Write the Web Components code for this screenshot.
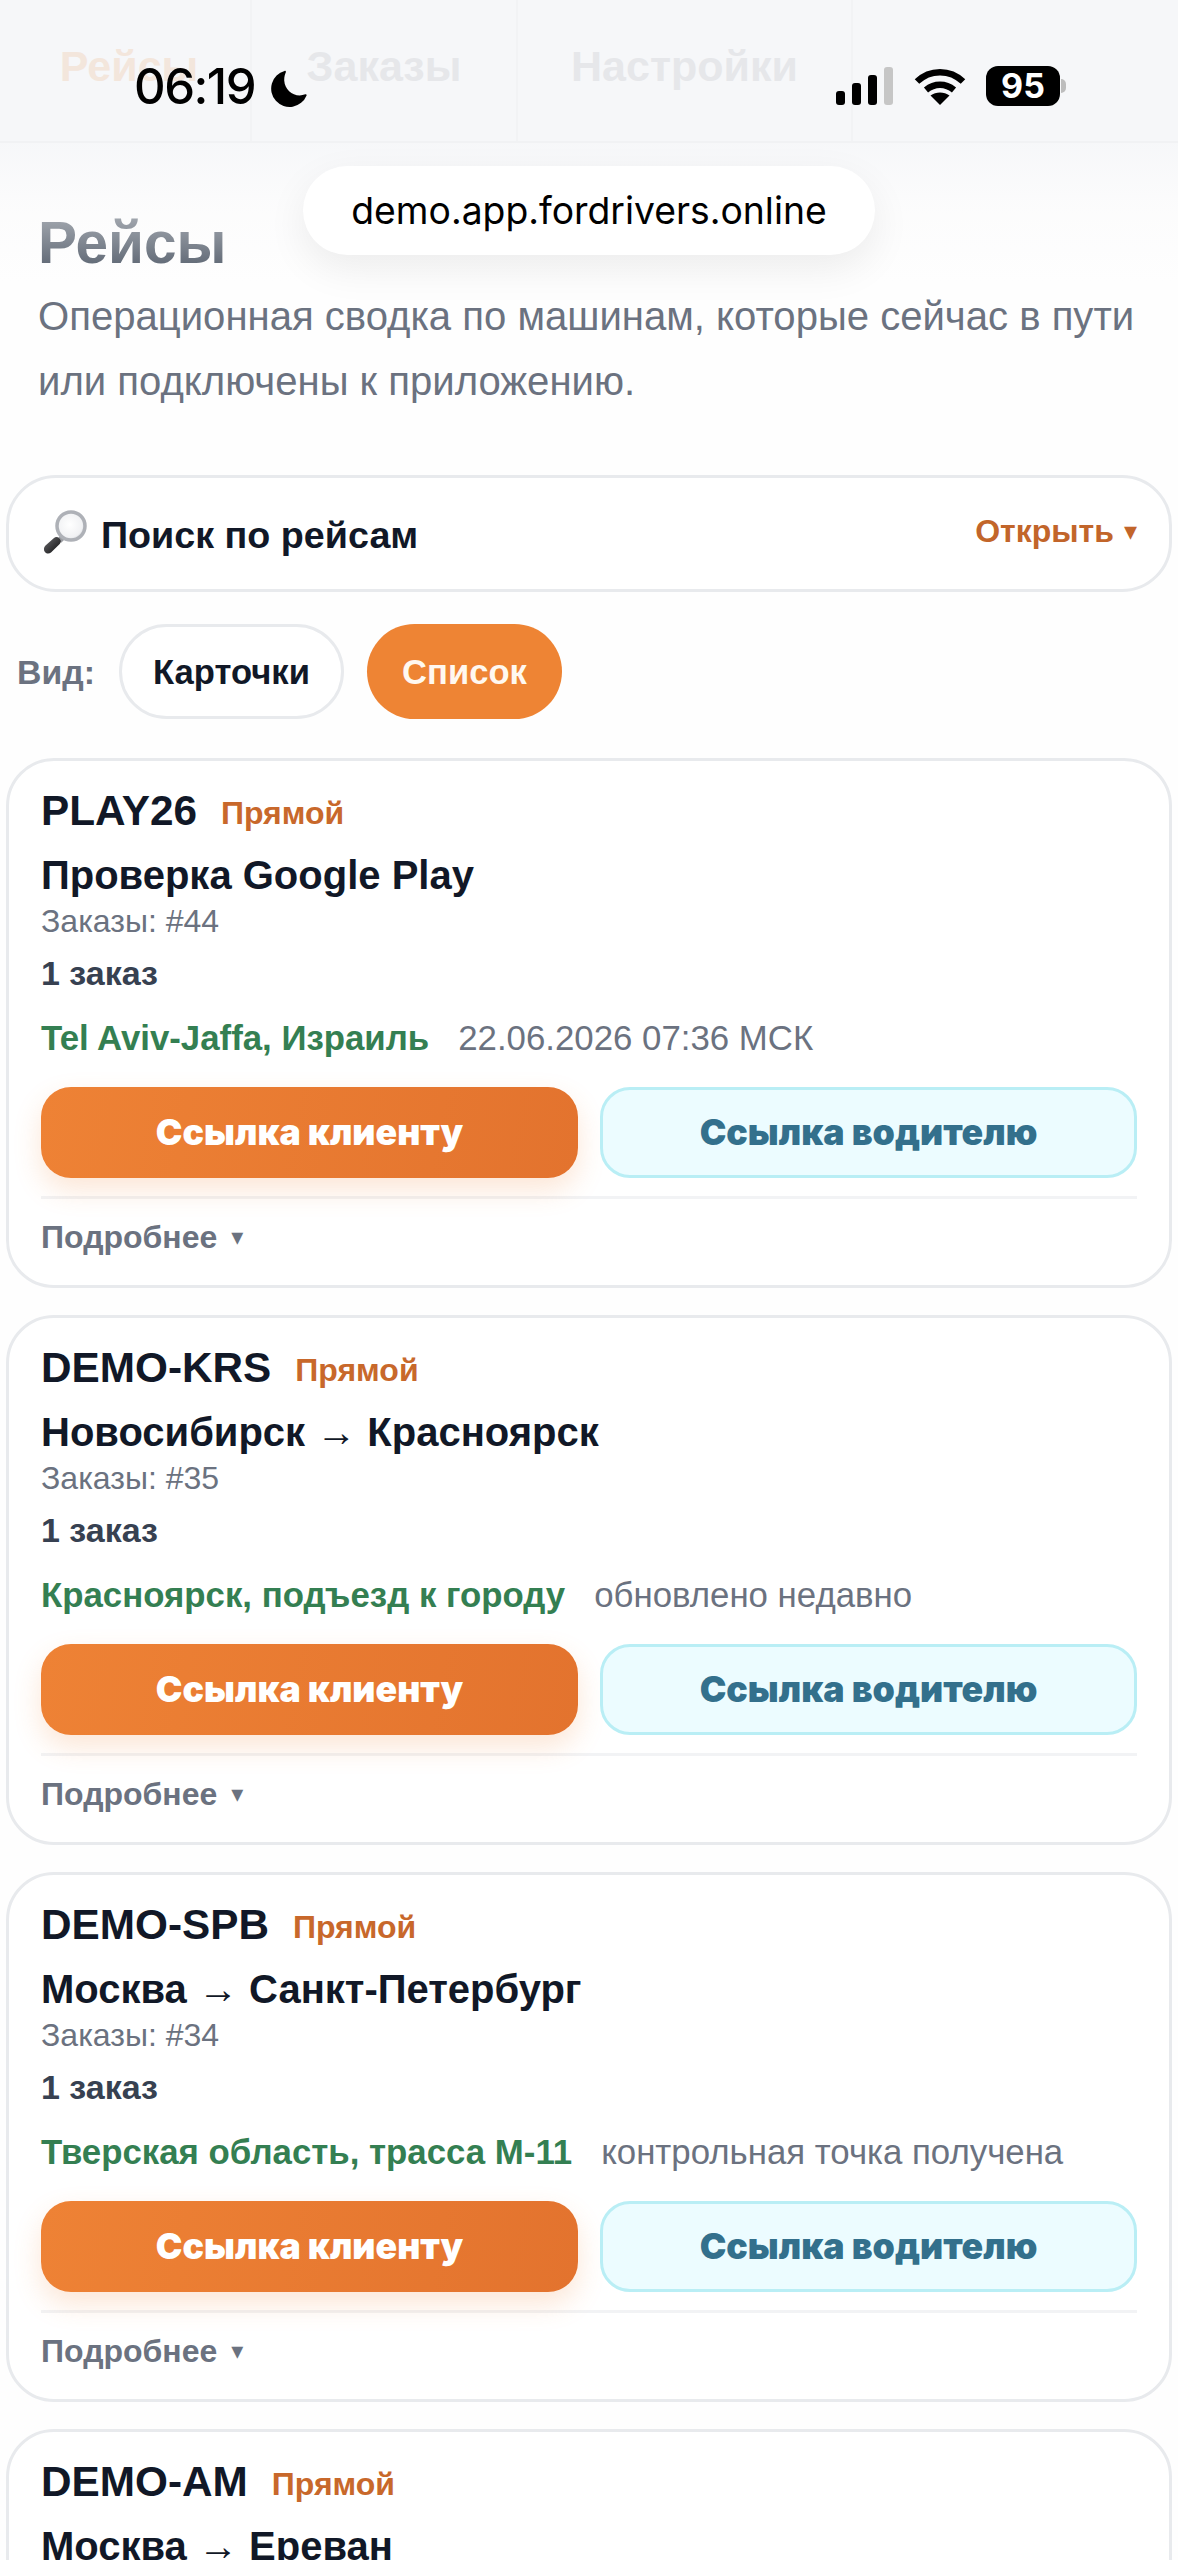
<!DOCTYPE html>
<html lang="ru">
<head>
<meta charset="utf-8">
<title>Рейсы</title>
<style>
html, body { margin: 0; padding: 0; background: #fefefe; }
body {
    height: 2560px;
    overflow: hidden;
    position: relative;
    font-family: "Liberation Sans", Arial, sans-serif;
    color: #111827;
}
main { display: block; padding: 0 6px; }
</style>
</head>
<body>
<top-chrome></top-chrome>
<app-tabs></app-tabs>
<main>
    <page-head title="Рейсы">Операционная сводка по машинам, которые сейчас в пути или подключены к приложению.</page-head>
    <search-panel></search-panel>
    <view-switch></view-switch>
    <trip-card code="PLAY26" route="Проверка Google Play" orders="#44" place="Tel Aviv-Jaffa, Израиль" stamp="22.06.2026 07:36 МСК"></trip-card>
    <trip-card code="DEMO-KRS" route="Новосибирск → Красноярск" orders="#35" place="Красноярск, подъезд к городу" stamp="обновлено недавно"></trip-card>
    <trip-card code="DEMO-SPB" route="Москва → Санкт-Петербург" orders="#34" place="Тверская область, трасса М-11" stamp="контрольная точка получена"></trip-card>
    <trip-card code="DEMO-AM" route="Москва → Ереван"></trip-card>
</main>

<script>
/* Статус-бар телефона и адресная плашка браузера поверх страницы */
class TopChrome extends HTMLElement {
    constructor() {
        super();
        this.attachShadow({ mode: 'open' }).innerHTML = `
<style>
:host { display: block; position: absolute; inset: 0 0 auto 0; height: 290px; z-index: 10; pointer-events: none; }
.veil {
    position: absolute; inset: 143px 0 0 0;
    background: linear-gradient(180deg, rgba(246,247,249,.95) 0, rgba(250,250,251,.6) 60px, rgba(254,254,254,0) 140px);
}
.clock {
    position: absolute; left: 134px; top: 60px; height: 54px;
    display: flex; align-items: center; gap: 15px;
    font: 500 49px/54px Inter, "Liberation Sans", sans-serif; color: #000; letter-spacing: -1.500px;
}
.clock svg { width: 38px; height: 38px; margin-top: 2px; }
.icons { position: absolute; left: 836px; top: 66px; display: flex; align-items: center; }
.icons svg { display: block; }
.battery {
    position: relative; width: 74px; height: 40px; margin-left: 20px; border-radius: 12px; background: #000; color: #fff;
    font: 700 34px/40px Inter, "Liberation Sans", sans-serif; text-align: center;
}
.battery::after {
    content: ''; position: absolute; left: 75px; top: 13px; width: 5px; height: 14px;
    background: #bdbdbd; border-radius: 0 7px 7px 0;
}
.url {
    position: absolute; left: 303px; top: 166px; width: 572px; height: 89px; border-radius: 45px;
    background: #fff; box-shadow: 0 14px 40px rgba(0,0,0,.07);
    display: flex; align-items: center; justify-content: center;
    font: 400 37.300px/1 Inter, "Liberation Sans", sans-serif; color: #000;
}
</style>
<div class="veil"></div>
<div class="clock"><span>06:19</span>
    <svg viewBox="0 0 24 24"><path fill="#000" d="M9.200 1.200a11.600 11.600 0 1 0 13.900 15.500c.2-.5-.3-.9-.8-.7-6.300 2.400-12.900-2-13.300-8.600-.1-2 .3-3.900 1-5.400.2-.5-.3-1-.8-.8z"/></svg>
</div>
<div class="icons">
    <svg width="58" height="38" viewBox="0 0 58 38">
        <rect x="0" y="24" width="9" height="14" rx="3" fill="#000"/>
        <rect x="16" y="16" width="9" height="22" rx="3" fill="#000"/>
        <rect x="32" y="8" width="9" height="30" rx="3" fill="#000"/>
        <rect x="48" y="0" width="9" height="38" rx="3" fill="#c6c6c6"/>
    </svg>
    <svg style="margin-left:20px" width="52" height="38" viewBox="0 0 52 38">
        <path fill="none" stroke="#000" stroke-width="6.500" d="M3 14.500C16 2 36 2 49 14.500"/>
        <path fill="none" stroke="#000" stroke-width="6.500" d="M12 23c8.500-7 19.500-7 28 0"/>
        <path fill="#000" d="M26 38 16.500 28.500c5.500-4 13.500-4 19 0z"/>
    </svg>
    <div class="battery">95</div>
</div>
<div class="url">demo.app.fordrivers.online</div>`;
    }
}

/* Верхние вкладки приложения */
class AppTabs extends HTMLElement {
    constructor() {
        super();
        const items = [
            { label: 'Рейсы', w: 244, color: '#f3e6dc' },
            { label: 'Заказы', w: 266, color: '#e6e7ea' },
            { label: 'Настройки', w: 335, color: '#e6e7ea' },
        ];
        this.attachShadow({ mode: 'open' }).innerHTML = `
<style>
:host { display: flex; height: 141px; padding: 0 8px; background: #f6f7f9; border-bottom: 2px solid #f1f2f4; }
.tab {
    box-sizing: border-box; height: 100%; padding-bottom: 8px; border-right: 2px solid #f2f3f5;
    display: flex; align-items: center; justify-content: center;
    font: 700 43px/1 "Liberation Sans", Arial, sans-serif;
}
</style>
${items.map(t => `<div class="tab" style="width:${t.w}px;color:${t.color}">${t.label}</div>`).join('')}`;
    }
}

class PageHead extends HTMLElement {
    constructor() {
        super();
        this.attachShadow({ mode: 'open' }).innerHTML = `
<style>
:host { display: block; padding: 66px 32px 61px; }
h1 { margin: 0; font: 700 58.500px/68px "Liberation Sans", Arial, sans-serif; color: #4b5563; }
p { margin: 7px 0 0; font: 400 40.100px/65px "Liberation Sans", Arial, sans-serif; color: #6b7280; }
</style>
<h1>${this.getAttribute('title')}</h1>
<p><slot></slot></p>`;
    }
}

class SearchPanel extends HTMLElement {
    constructor() {
        super();
        this.attachShadow({ mode: 'open' }).innerHTML = `
<style>
:host {
    display: flex; align-items: center; box-sizing: border-box; height: 117px; padding: 0 32px 0 30px;
    background: #fff; border: 3px solid #e8eaed; border-radius: 50px;
}
svg { width: 50px; height: 48px; margin-right: 12px; flex: none; }
.label { margin-top: 2px; font: 700 37.700px/44px "Liberation Sans", Arial, sans-serif; color: #111827; }
.toggle {
    margin-left: auto; margin-top: -6px; display: flex; align-items: center; gap: 10px;
    font: 700 32px/40px "Liberation Sans", Arial, sans-serif; color: #c2652a;
}
.toggle i { font: 400 26px/1 "DejaVu Sans", sans-serif; }
</style>
<svg viewBox="0 0 50 48">
    <defs>
        <radialGradient id="lens" cx=".45" cy=".45" r=".6"><stop offset="0" stop-color="#fff"/><stop offset=".75" stop-color="#f1f2f4"/><stop offset="1" stop-color="#cfd2d8"/></radialGradient>
        <linearGradient id="grip" x1="0" y1="0" x2="1" y2="1"><stop offset="0" stop-color="#6d6d70"/><stop offset="1" stop-color="#0b0b0c"/></linearGradient>
    </defs>
    <path d="M20 27 24 31" stroke="#9a9ca1" stroke-width="5"/>
    <path d="M6.500 35.500 15 28c1.500-1.300 3.800-1.200 5.100.2l.8.9c1.300 1.400 1.200 3.700-.2 5L12 42.500c-1.800 1.500-4.400 1.400-5.900-.2-1.700-1.800-1.500-5.100.4-6.800z" fill="url(#grip)"/>
    <circle cx="32" cy="16" r="14" fill="url(#lens)" stroke="#aeb1b7" stroke-width="3.500"/>
</svg>
<span class="label">Поиск по рейсам</span>
<span class="toggle">Открыть <i>▾</i></span>`;
    }
}

class ViewSwitch extends HTMLElement {
    constructor() {
        super();
        this.attachShadow({ mode: 'open' }).innerHTML = `
<style>
:host { display: flex; align-items: center; height: 95px; margin: 32px 0 39px; padding-left: 11px; }
.cap { width: 102px; font: 700 33.800px/40px "Liberation Sans", Arial, sans-serif; color: #6b7280; }
.pill {
    box-sizing: border-box; height: 95px; border-radius: 48px; display: flex; align-items: center; justify-content: center;
    font: 700 34.600px/40px "Liberation Sans", Arial, sans-serif;
}
.off { width: 225px; background: #fff; border: 3px solid #e8eaed; color: #111827; }
.on { width: 195px; margin-left: 23px; background: #ee8434; color: #fff8f0; }
</style>
<span class="cap">Вид:</span>
<span class="pill off">Карточки</span>
<span class="pill on">Список</span>`;
    }
}

/* Карточка рейса */
class TripCard extends HTMLElement {
    constructor() {
        super();
        const a = n => this.getAttribute(n);
        // у последней карточки в кадр попадает только шапка
        const body = a('orders') ? `
<div class="orders">Заказы: ${a('orders')}</div>
<div class="count">1 заказ</div>
<div class="where"><b>${a('place')}</b><span>${a('stamp')}</span></div>
<div class="actions"><div class="btn client">Ссылка клиенту</div><div class="btn driver">Ссылка водителю</div></div>
<div class="more">Подробнее <i>▾</i></div>` : '';
        this.attachShadow({ mode: 'open' }).innerHTML = `
<style>
:host {
    display: block; box-sizing: border-box; height: 530px; margin-bottom: 27px; padding: 23px 32px 0;
    background: #fff; border: 3px solid #e8eaed; border-radius: 48px;
}
.head { display: flex; align-items: center; gap: 24px; height: 54px; }
.code { font: 700 42.300px/54px "Liberation Sans", Arial, sans-serif; color: #111827; }
.kind { font: 700 32px/54px "Liberation Sans", Arial, sans-serif; color: #c8682b; margin-top: 3px; }
.route { margin-top: 13px; font: 700 40px/48px "Liberation Sans", Arial, sans-serif; color: #111827; }
.orders { margin-top: 1px; font: 400 32px/42px "Liberation Sans", Arial, sans-serif; color: #6b7280; }
.count { margin-top: 9px; font: 700 34px/44px "Liberation Sans", Arial, sans-serif; color: #374151; }
.where { display: flex; gap: 29px; margin-top: 20px; font: 400 34.800px/46px "Liberation Sans", Arial, sans-serif; color: #6b7280; white-space: nowrap; }
.where b { color: #347f52; }
.actions { display: grid; grid-template-columns: 1fr 1fr; gap: 22px; margin-top: 26px; }
.btn {
    box-sizing: border-box; height: 91px; border-radius: 30px; display: flex; align-items: center; justify-content: center;
    font: 900 35.700px/1 Inter, "Liberation Sans", sans-serif;
}
.client { background: linear-gradient(100deg, #ee8235, #e3732e); color: #fff; box-shadow: 0 12px 28px rgba(238,132,52,.2); }
.driver { background: #ecfcff; border: 3px solid #b9eef5; color: #33708c; }
.more { margin-top: 18px; padding-top: 16px; border-top: 3px solid #f2f3f5; font: 700 32px/44px "Liberation Sans", Arial, sans-serif; color: #6b7280; display: flex; gap: 14px; }
.more i { font: 400 24px/44px "DejaVu Sans", sans-serif; }
</style>
<div class="head"><span class="code">${a('code')}</span><span class="kind">Прямой</span></div>
<div class="route">${a('route')}</div>${body}`;
    }
}

customElements.define('top-chrome', TopChrome);
customElements.define('app-tabs', AppTabs);
customElements.define('page-head', PageHead);
customElements.define('search-panel', SearchPanel);
customElements.define('view-switch', ViewSwitch);
customElements.define('trip-card', TripCard);
</script>
</body>
</html>
